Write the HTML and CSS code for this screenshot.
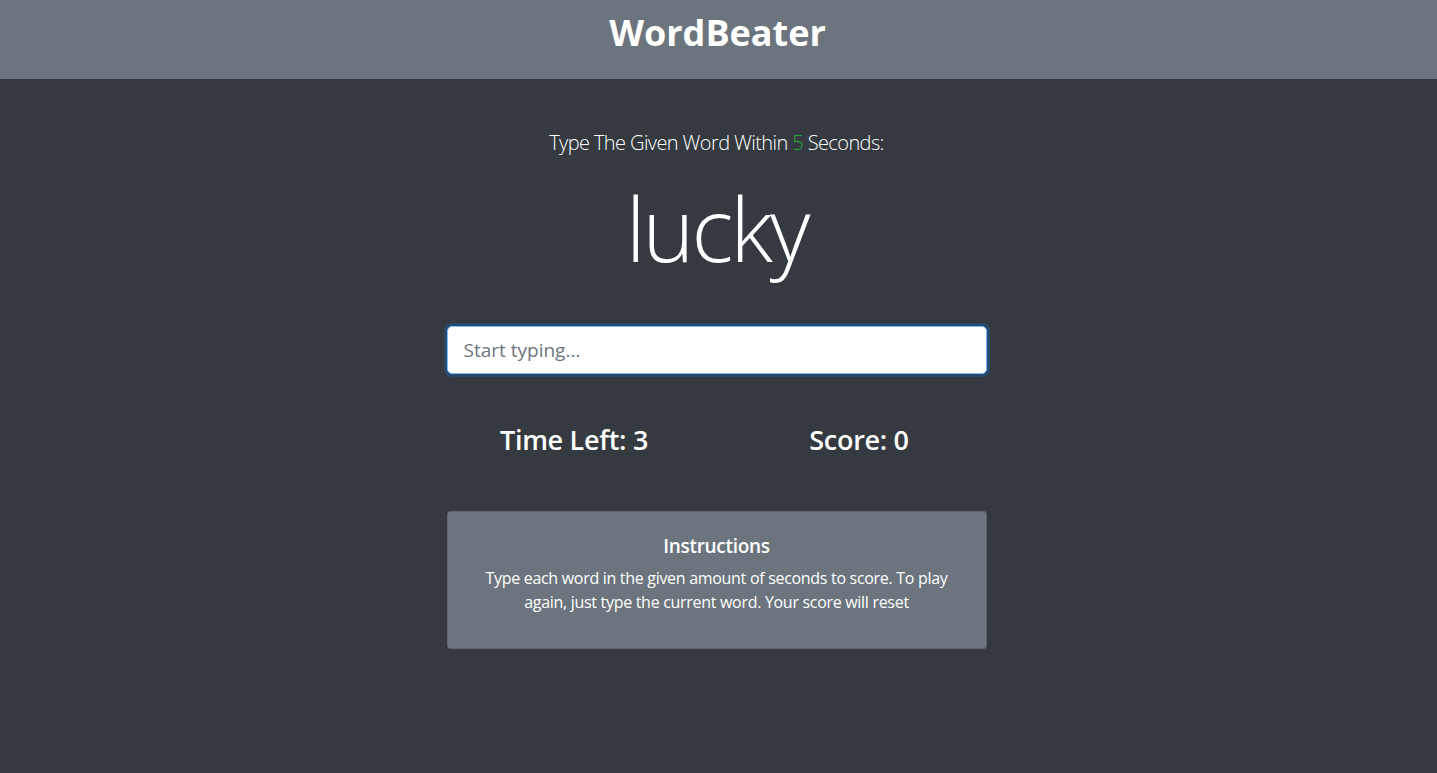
FILE: index.html
```html
<!DOCTYPE html>
<html lang="en">
<head>
<meta charset="utf-8">
<title>WordBeater</title>
<link rel="stylesheet" href="styles.css">
</head>
<body>
<header class="topbar">
  <h1 class="brand">WordBeater</h1>
</header>
<main class="main">
  <div class="col">
    <p class="lead">Type The Given Word Within <span class="seconds">5</span> Seconds:</p>
    <h2 class="word">lucky</h2>
    <input class="word-input" type="text" placeholder="Start typing...">
    <div class="stats">
      <h3 class="stat">Time Left: <span>3</span></h3>
      <h3 class="stat">Score: <span>0</span></h3>
    </div>
    <div class="card">
      <h5 class="card-title">Instructions</h5>
      <p class="card-text">Type each word in the given amount of seconds to score. To play again, just type the current word. Your score will reset</p>
    </div>
  </div>
</main>
</body>
</html>
```
FILE: styles.css
```css
* { box-sizing: border-box; }
html, body { height: 100%; }
body {
  margin: 0;
  background: #343a40;
  color: #fff;
  font-family: "Open Sans", "Noto Sans", sans-serif;
  font-size: 16px;
  line-height: 1.5;
}
.topbar {
  background: #6c757d;
  height: 79px;
  display: flex;
  align-items: center;
  justify-content: center;
  padding-right: 2px;
}
.brand {
  margin: 0;
  font-size: 36px;
  font-weight: 700;
  line-height: 1.2;
  padding-bottom: 14px;
}
.main {
  display: flex;
  justify-content: center;
  padding-top: 49px;
  padding-right: 4px;
}
.col {
  width: 540px;
  display: flex;
  flex-direction: column;
  align-items: center;
}
.lead {
  margin: 0;
  font-size: 20px;
  font-weight: 300;
  line-height: 1.5;
  letter-spacing: -0.6px;
}
.seconds { color: #28a745; }
.word {
  margin: 18px 0 0;
  font-size: 88px;
  font-weight: 300;
  line-height: 1.2;
  letter-spacing: -3px;
}
.word-input {
  margin-top: 44px;
  width: 540px;
  height: 48px;
  padding: 8px 16px;
  font: inherit;
  font-size: 19px;
  color: #495057;
  background: #fff;
  border: 1px solid #80bdff;
  border-radius: 5px;
  outline: none;
  box-shadow: 0 0 0 3px rgba(0, 123, 255, 0.25);
}
.word-input::placeholder { color: #6c757d; }
.stats {
  width: 570px;
  display: grid;
  grid-template-columns: 1fr 1fr;
  margin-top: 50px;
}
.stat {
  margin: 0;
  text-align: center;
  font-size: 27px;
  font-weight: 600;
  line-height: 1.2;
  letter-spacing: -0.3px;
}
.card {
  margin-top: 55px;
  width: 540px;
  background: #6c757d;
  border: 1px solid rgba(0, 0, 0, 0.125);
  border-radius: 4px;
  padding: 23px 20px 20px;
  text-align: center;
}
.card-title {
  margin: 0 0 8px;
  font-size: 19px;
  font-weight: 600;
  line-height: 1.2;
  letter-spacing: -0.3px;
}
.card-text {
  margin: 0 0 14px;
  font-size: 16px;
  line-height: 24px;
  letter-spacing: -0.3px;
}
```
